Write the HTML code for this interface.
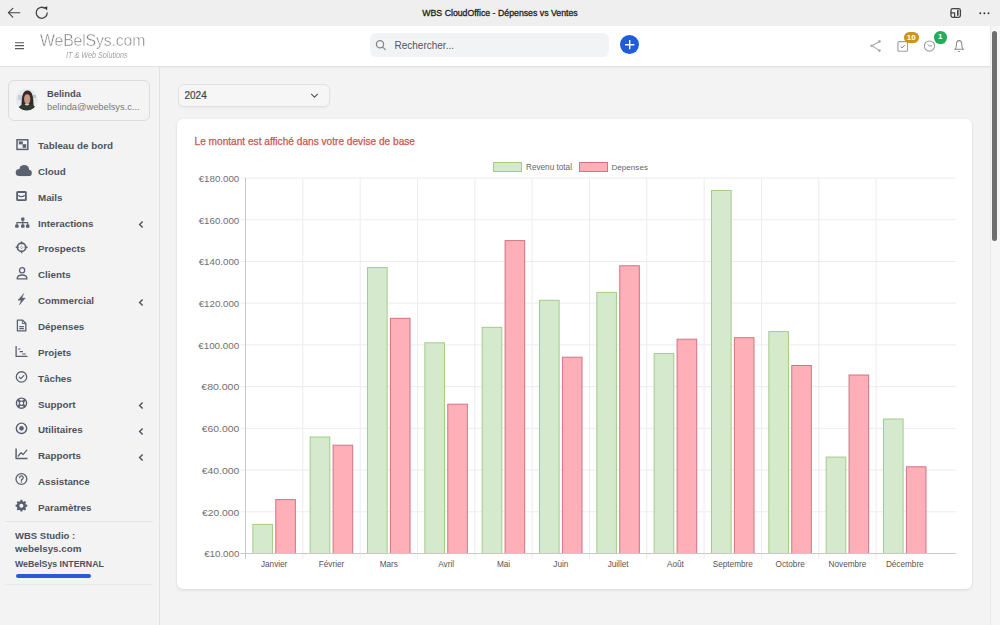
<!DOCTYPE html>
<html><head><meta charset="utf-8">
<style>
*{margin:0;padding:0;box-sizing:border-box}
html,body{width:1000px;height:625px;overflow:hidden;background:#f3f3f3;font-family:"Liberation Sans",sans-serif;position:relative}
.abs{position:absolute}
#chrome{left:0;top:0;width:1000px;height:26px;background:#efefef}
#title{left:0;top:7.8px;width:1000px;text-align:center;font-size:8.75px;color:#222;-webkit-text-stroke:0.3px #222}
#header{left:0;top:26px;width:990px;height:41px;background:#fff;border-bottom:1px solid #e0e0e0;box-shadow:0 1px 1px rgba(0,0,0,0.03)}
#logo{left:40px;top:31px;font-size:17px;color:#7a7a7a;letter-spacing:-0.15px;-webkit-text-stroke:0.5px #fff;transform:scaleX(0.93);transform-origin:left top}
#logo2{left:66px;top:50px;font-size:8.5px;color:#a3a3a3;font-style:italic;transform:scaleX(0.85);transform-origin:left}
#search{left:370px;top:33px;width:239px;height:24px;background:#f2f3f5;border-radius:6px}
#searchtxt{left:394.5px;top:40px;font-size:10px;color:#555}
#plus{left:620px;top:34.6px;width:19.4px;height:19.4px;border-radius:50%;background:#1f5cd8}
#sidebar{left:0;top:67px;width:160px;height:558px;background:#f3f3f3;border-right:1px solid #e1e2e8}
#ucard{left:8px;top:79.5px;width:141.5px;height:41px;border:1px solid #dcdcdc;border-radius:6px;background:#f4f4f4}
.uname{left:47px;top:88.3px;font-size:9.4px;font-weight:bold;color:#4a5060}
.uemail{left:47px;top:101.5px;font-size:9.3px;color:#787878}
.mi{position:absolute;left:38px;font-size:9.8px;font-weight:bold;color:#4d525e;white-space:nowrap}
.chev{position:absolute;left:137px}
.ic{position:absolute;left:14px}
#select{left:177.5px;top:83.5px;width:152px;height:23px;border:1px solid #e2e2e2;border-radius:6px;background:#f6f6f6;box-shadow:0 1px 2px rgba(0,0,0,0.05)}
#seltxt{left:184.5px;top:90px;font-size:10px;color:#444;-webkit-text-stroke:0.2px #444}
#card{left:177px;top:118.5px;width:795px;height:470.5px;background:#fff;border-radius:6px;box-shadow:0 1px 3px rgba(0,0,0,0.12)}
#cardtitle{left:194.5px;top:136.4px;font-size:10.15px;color:#d05353;-webkit-text-stroke:0.25px #d05353}
#scroll{left:990px;top:26px;width:10px;height:599px;background:#f6f6f6;border-left:1px solid #e8e8e8}
#thumb{left:992px;top:30.5px;width:5px;height:210px;border-radius:3px;background:#6e6e6e}
.badge{position:absolute;color:#fff;font-size:8px;font-weight:bold;text-align:center;border-radius:7px}
.side-t{position:absolute;left:15px;font-weight:bold;color:#4b5262;white-space:nowrap}
</style></head><body>
<div id="chrome" class="abs"></div>
<div id="title" class="abs">WBS CloudOffice - Dépenses vs Ventes</div>
<!-- chrome icons -->
<svg class="abs" style="left:0;top:0" width="1000" height="26">
  <path d="M43.6 7.2L47.4 6.5L47.1 10.6Z" fill="#3a3a3a"/>
  <g stroke="#444" stroke-width="1.3" fill="none" stroke-linecap="round" stroke-linejoin="round">
    <path d="M19.8 12.7H8.6M12.8 8.3L8.4 12.7L12.8 17.1" stroke-width="1.15"/>
    <path d="M47.2 12.9A5.5 5.5 0 1 1 44.6 8.1" stroke-width="1.25"/>
    <rect x="951" y="8.6" width="9.4" height="8.8" rx="1.8"/>
    <path d="M957.8 10.3V15.2" stroke-width="1.6"/>
    <path d="M951 12.8H954.6V17.4" stroke-width="1.2"/>
  </g>
  <g fill="#333"><circle cx="980.3" cy="13.2" r="0.95"/><circle cx="984.4" cy="13.2" r="0.95"/><circle cx="988.5" cy="13.2" r="0.95"/></g>
</svg>
<div id="header" class="abs"></div>
<svg class="abs" style="left:0;top:26px" width="990" height="40">
  <g stroke="#5a5a5a" stroke-width="1.1"><path d="M15 16.7H24M15 19.6H24M15 22.6H24"/></g>
</svg>
<div id="logo" class="abs">WeBelSys.com</div>
<div id="logo2" class="abs">IT &amp; Web Solutions</div>
<div id="search" class="abs"></div>
<svg class="abs" style="left:370px;top:33px" width="30" height="24">
  <g stroke="#858585" stroke-width="1.25" fill="none"><circle cx="10" cy="11.3" r="3.6"/><path d="M12.8 14.1L15.3 16.6" stroke-linecap="round"/></g>
</svg>
<div id="searchtxt" class="abs">Rechercher...</div>
<div id="plus" class="abs"></div>
<svg class="abs" style="left:620px;top:34.6px" width="20" height="20">
  <path d="M9.7 5.1V14.3M5.1 9.7H14.3" stroke="#fff" stroke-width="1.4"/>
</svg>
<!-- header right icons -->
<svg class="abs" style="left:860px;top:26px" width="130" height="40">
  <g stroke="#ababab" stroke-width="1.1" fill="none" stroke-linejoin="round">
    <path d="M19.6 15.4L12 19.8L19.6 24.6"/>
  </g>
  <g fill="#b0b0b0"><circle cx="19.4" cy="15.5" r="1.4"/><circle cx="11.6" cy="19.8" r="1.4"/><circle cx="19.4" cy="24.6" r="1.4"/></g>
  <g stroke="#a0a0a6" stroke-width="1.15" fill="none">
    <rect x="37.9" y="15.6" width="9.6" height="9.6" rx="1"/>
    <path d="M40.7 20.6L42 21.9L44.8 19.2" stroke="#80838f" stroke-width="1"/>
  </g>
  <g stroke="#999" stroke-width="1.05" fill="none">
    <circle cx="69.5" cy="20.1" r="5.1"/>
    <path d="M67.6 18.4L69.5 20.1L72.2 19.6" stroke="#888" stroke-width="0.9"/>
    <path d="M94.2 23.3H104M95.3 23.3C96.3 22 96.4 20.6 96.4 18.6C96.4 16 97.5 14.6 99.1 14.6C100.7 14.6 101.8 16 101.8 18.6C101.8 20.6 101.9 22 102.9 23.3M98.3 25.4H99.9" stroke="#8a8a8a"/>
  </g>
</svg>
<div class="badge" style="left:904px;top:31.5px;width:14.5px;height:11.5px;background:#cd9416;line-height:11.5px">10</div>
<div class="badge" style="left:934px;top:31px;width:12.6px;height:12.6px;background:#23ad5a;line-height:12.6px;border-radius:50%">1</div>
<div id="scroll" class="abs"></div>
<div id="thumb" class="abs"></div>
<!-- sidebar -->
<div id="sidebar" class="abs"></div>
<div id="ucard" class="abs"></div>
<svg class="abs" style="left:16px;top:89px" width="22" height="22">
  <defs><clipPath id="av"><circle cx="10.7" cy="10.5" r="11"/></clipPath><filter id="bl"><feGaussianBlur stdDeviation="0.6"/></filter></defs>
  <g clip-path="url(#av)"><g filter="url(#bl)">
    <rect x="-2" y="-2" width="26" height="26" fill="#e4eaee"/>
    <rect x="2" y="6" width="4" height="5" fill="#c5d0dc"/>
    <rect x="17" y="6" width="3" height="3" fill="#b9c4cf"/>
    <path d="M5.5 17C5.5 8 6.5 1.5 11.5 1.5C16.5 1.5 17.5 8 17.5 17Z" fill="#3b2722"/>
    <ellipse cx="11.2" cy="10" rx="3.1" ry="4.8" fill="#c49a86"/>
    <path d="M1 23C2 16.5 6 15 11 15C16 15 20 16.5 21 23Z" fill="#2f3a33"/>
    <path d="M8.8 15.5Q11 17.5 13.2 15.5L12.8 14.5H9.2Z" fill="#d8d2c8"/>
  </g></g>
</svg>
<div class="uname abs">Belinda</div>
<div class="uemail abs">belinda@webelsys.c...</div>
<div class="mi" style="top:140.00px">Tableau de bord</div>
<svg class="ic" style="top:137.00px" width="20" height="16" overflow="visible"><g fill="none" stroke="#5a6070" stroke-width="1.5"><rect x="3" y="2.8" width="10.8" height="9.6"/></g><g fill="#5a6070"><rect x="4.8" y="4.4" width="4" height="3"/><rect x="8.6" y="7.2" width="3.6" height="3.6"/></g></svg>
<div class="mi" style="top:165.85px">Cloud</div>
<svg class="ic" style="top:162.85px" width="20" height="16" overflow="visible"><g fill="#5a6272"><circle cx="5.2" cy="9.6" r="3.5"/><circle cx="10.2" cy="6.8" r="4.9"/><circle cx="14.6" cy="9.9" r="3.2"/><rect x="5.2" y="8" width="9.4" height="5.1"/></g></svg>
<div class="mi" style="top:191.70px">Mails</div>
<svg class="ic" style="top:188.70px" width="20" height="16" overflow="visible"><rect x="3.1" y="3" width="8.8" height="8.2" rx="0.6" fill="#f6f6f8" stroke="#5a6070" stroke-width="1.8"/><path d="M4.3 6.2Q7.5 9.2 10.7 6.2" stroke="#5a6070" stroke-width="1.2" fill="none"/></svg>
<div class="mi" style="top:217.55px">Interactions</div>
<svg class="chev" style="top:218.95px" width="10" height="12"><path d="M5.6 2.5L2.6 5.5L5.6 8.5" stroke="#4a4e58" stroke-width="1.35" fill="none"/></svg>
<svg class="ic" style="top:214.55px" width="20" height="16" overflow="visible"><g fill="#5a6070"><rect x="7.2" y="2.6" width="3.2" height="3.2" rx="0.6"/><rect x="1.2" y="9.6" width="3.4" height="3.2" rx="0.6"/><rect x="7.1" y="9.6" width="3.4" height="3.2" rx="0.6"/><rect x="12" y="9.6" width="3.4" height="3.2" rx="0.6"/></g><path d="M8.8 5.5V10M2.9 10V7.6H13.7V10" stroke="#5a6070" stroke-width="1.1" fill="none"/></svg>
<div class="mi" style="top:243.40px">Prospects</div>
<svg class="ic" style="top:240.40px" width="20" height="16" overflow="visible"><g fill="none" stroke="#5a6070"><circle cx="7.6" cy="7.3" r="4.2" stroke-width="1.7"/><path d="M7.6 1.4V4.2M7.6 10.4V13.2M1.7 7.3H4.5M10.7 7.3H13.5" stroke-width="1.4"/><path d="M7.6 5.6V6.6M7.6 8V9M5.9 7.3H6.9M8.3 7.3H9.3" stroke-width="0.6"/></g></svg>
<div class="mi" style="top:269.25px">Clients</div>
<svg class="ic" style="top:266.25px" width="20" height="16" overflow="visible"><g fill="none" stroke="#5a6070" stroke-width="1.3"><circle cx="8.1" cy="4.2" r="2.6"/><path d="M3.2 12.9C3.2 10.2 5.4 9 8.1 9C10.8 9 13 10.2 13 12.9Z" stroke-linejoin="round"/></g></svg>
<div class="mi" style="top:295.10px">Commercial</div>
<svg class="chev" style="top:296.50px" width="10" height="12"><path d="M5.6 2.5L2.6 5.5L5.6 8.5" stroke="#4a4e58" stroke-width="1.35" fill="none"/></svg>
<svg class="ic" style="top:292.10px" width="20" height="16" overflow="visible"><path d="M9.8 1.4L3.9 8.2H7.2L5.4 12.9L11.3 6H7.9Z" fill="#5a6070" stroke="#5a6070" stroke-width="0.4" stroke-linejoin="round"/></svg>
<div class="mi" style="top:320.95px">Dépenses</div>
<svg class="ic" style="top:317.95px" width="20" height="16" overflow="visible"><g fill="none" stroke="#5a6070" stroke-width="1.3" stroke-linejoin="round"><path d="M3.4 2.1H8.7L11.8 5.2V12.9H3.4Z"/><path d="M8.4 2.3V5.6H11.6" stroke-width="1"/><path d="M5.3 8.6H9.9M5.3 10.6H9.9" stroke-width="1.1"/></g></svg>
<div class="mi" style="top:346.80px">Projets</div>
<svg class="ic" style="top:343.80px" width="20" height="16" overflow="visible"><g fill="none" stroke="#5a6070" stroke-width="1.3"><path d="M2.1 2.1V12.4H13.5"/><path d="M4.1 5H6.2M5.6 7.6H9M8.2 10H11.8" stroke-width="1.2"/></g></svg>
<div class="mi" style="top:372.65px">Tâches</div>
<svg class="ic" style="top:369.65px" width="20" height="16" overflow="visible"><g fill="none" stroke="#5a6070" stroke-width="1.3"><circle cx="7.5" cy="6.95" r="5.2"/><path d="M5.2 7.1L6.8 8.6L9.8 5.6" stroke-linecap="round" stroke-linejoin="round"/></g></svg>
<div class="mi" style="top:398.50px">Support</div>
<svg class="chev" style="top:399.90px" width="10" height="12"><path d="M5.6 2.5L2.6 5.5L5.6 8.5" stroke="#4a4e58" stroke-width="1.35" fill="none"/></svg>
<svg class="ic" style="top:395.50px" width="20" height="16" overflow="visible"><g fill="none" stroke="#5a6070"><circle cx="7.5" cy="7.2" r="5.1" stroke-width="1.4"/><circle cx="7.5" cy="7.2" r="2.2" stroke-width="1.2"/><path d="M3.8 3.5L5.9 5.6M11.2 3.5L9.1 5.6M3.8 10.9L5.9 8.8M11.2 10.9L9.1 8.8" stroke-width="2.2"/></g></svg>
<div class="mi" style="top:424.35px">Utilitaires</div>
<svg class="chev" style="top:425.75px" width="10" height="12"><path d="M5.6 2.5L2.6 5.5L5.6 8.5" stroke="#4a4e58" stroke-width="1.35" fill="none"/></svg>
<svg class="ic" style="top:421.35px" width="20" height="16" overflow="visible"><g fill="none" stroke="#5a6070" stroke-width="1.4"><circle cx="7.5" cy="7.35" r="5.2"/></g><circle cx="7.5" cy="7.35" r="2.3" fill="#5a6070"/></svg>
<div class="mi" style="top:450.20px">Rapports</div>
<svg class="chev" style="top:451.60px" width="10" height="12"><path d="M5.6 2.5L2.6 5.5L5.6 8.5" stroke="#4a4e58" stroke-width="1.35" fill="none"/></svg>
<svg class="ic" style="top:447.20px" width="20" height="16" overflow="visible"><g fill="none" stroke="#5a6070" stroke-width="1.3" stroke-linejoin="round"><path d="M2.1 1.4V11.6H13.5" stroke-width="1.5"/><path d="M4.3 9L7 5.6L9 7.6L12.8 3.2" stroke-linecap="round"/></g></svg>
<div class="mi" style="top:476.05px">Assistance</div>
<svg class="ic" style="top:473.05px" width="20" height="16" overflow="visible"><g fill="none" stroke="#5a6070" stroke-width="1.3"><circle cx="7.4" cy="6.05" r="5.4"/><path d="M5.6 4.7A1.8 1.8 0 1 1 7.9 6.4C7.5 6.6 7.4 6.9 7.4 7.4" stroke-linecap="round"/></g><circle cx="7.4" cy="8.9" r="0.75" fill="#5a6070"/></svg>
<div class="mi" style="top:501.90px">Paramètres</div>
<svg class="ic" style="top:498.90px" width="20" height="16" overflow="visible"><g fill="#5a6070"><path d="M6.3 0.6H8.5L8.9 2.3L10.3 2.9L11.8 2L13.3 3.5L12.4 5L13 6.4L14.7 6.8V9L13 9.4L12.4 10.8L13.3 12.3L11.8 13.8L10.3 12.9L8.9 13.5L8.5 15.2H6.3L5.9 13.5L4.5 12.9L3 13.8L1.5 12.3L2.4 10.8L1.8 9.4L0.1 9V6.8L1.8 6.4L2.4 5L1.5 3.5L3 2L4.5 2.9L5.9 2.3Z" transform="translate(7.4 6.7) scale(0.8) translate(-7.4 -7.9)"/></g><circle cx="7.4" cy="6.7" r="2" fill="#f3f3f3"/>
</svg>
<div class="abs" style="left:5px;top:521px;width:148px;height:1px;background:#e4e4e4"></div>
<div class="side-t" style="top:529.5px;font-size:9.5px">WBS Studio :</div>
<div class="side-t" style="top:543.3px;font-size:9.8px">webelsys.com</div>
<div class="side-t" style="top:559px;font-size:8.75px">WeBelSys INTERNAL</div>
<div class="abs" style="left:15.5px;top:574px;width:75px;height:4px;border-radius:2px;background:#2a5bd7"></div>
<div class="abs" style="left:5px;top:584px;width:148px;height:1px;background:#e9e9e9"></div>
<!-- main -->
<div id="select" class="abs"></div>
<div id="seltxt" class="abs">2024</div>
<svg class="abs" style="left:304px;top:88px" width="20" height="14"><path d="M7.2 5.8L10.5 9.1L13.8 5.8" stroke="#555" stroke-width="1.1" fill="none"/></svg>
<div id="card" class="abs"></div>
<div id="cardtitle" class="abs">Le montant est affiché dans votre devise de base</div>
<svg width="1000" height="625" style="position:absolute;left:0;top:0">
<line x1="240.5" y1="178.00" x2="956" y2="178.00" stroke="#ececec" stroke-width="1"/>
<line x1="240.5" y1="219.72" x2="956" y2="219.72" stroke="#ececec" stroke-width="1"/>
<line x1="240.5" y1="261.44" x2="956" y2="261.44" stroke="#ececec" stroke-width="1"/>
<line x1="240.5" y1="303.17" x2="956" y2="303.17" stroke="#ececec" stroke-width="1"/>
<line x1="240.5" y1="344.89" x2="956" y2="344.89" stroke="#ececec" stroke-width="1"/>
<line x1="240.5" y1="386.61" x2="956" y2="386.61" stroke="#ececec" stroke-width="1"/>
<line x1="240.5" y1="428.33" x2="956" y2="428.33" stroke="#ececec" stroke-width="1"/>
<line x1="240.5" y1="470.06" x2="956" y2="470.06" stroke="#ececec" stroke-width="1"/>
<line x1="240.5" y1="511.78" x2="956" y2="511.78" stroke="#ececec" stroke-width="1"/>
<line x1="302.83" y1="178" x2="302.83" y2="559" stroke="#ececec" stroke-width="1"/>
<line x1="360.16" y1="178" x2="360.16" y2="559" stroke="#ececec" stroke-width="1"/>
<line x1="417.49" y1="178" x2="417.49" y2="559" stroke="#ececec" stroke-width="1"/>
<line x1="474.82" y1="178" x2="474.82" y2="559" stroke="#ececec" stroke-width="1"/>
<line x1="532.15" y1="178" x2="532.15" y2="559" stroke="#ececec" stroke-width="1"/>
<line x1="589.48" y1="178" x2="589.48" y2="559" stroke="#ececec" stroke-width="1"/>
<line x1="646.81" y1="178" x2="646.81" y2="559" stroke="#ececec" stroke-width="1"/>
<line x1="704.14" y1="178" x2="704.14" y2="559" stroke="#ececec" stroke-width="1"/>
<line x1="761.47" y1="178" x2="761.47" y2="559" stroke="#ececec" stroke-width="1"/>
<line x1="818.80" y1="178" x2="818.80" y2="559" stroke="#ececec" stroke-width="1"/>
<line x1="876.13" y1="178" x2="876.13" y2="559" stroke="#ececec" stroke-width="1"/>
<rect x="252.87" y="524.40" width="19.60" height="29.10" fill="#d5e9cd" stroke="#a3cc86" stroke-width="1"/>
<rect x="275.77" y="499.60" width="19.60" height="53.90" fill="#ffafb7" stroke="#d27483" stroke-width="1"/>
<rect x="310.20" y="437.00" width="19.60" height="116.50" fill="#d5e9cd" stroke="#a3cc86" stroke-width="1"/>
<rect x="333.10" y="445.20" width="19.60" height="108.30" fill="#ffafb7" stroke="#d27483" stroke-width="1"/>
<rect x="367.53" y="267.60" width="19.60" height="285.90" fill="#d5e9cd" stroke="#a3cc86" stroke-width="1"/>
<rect x="390.43" y="318.30" width="19.60" height="235.20" fill="#ffafb7" stroke="#d27483" stroke-width="1"/>
<rect x="424.86" y="342.80" width="19.60" height="210.70" fill="#d5e9cd" stroke="#a3cc86" stroke-width="1"/>
<rect x="447.76" y="404.20" width="19.60" height="149.30" fill="#ffafb7" stroke="#d27483" stroke-width="1"/>
<rect x="482.19" y="327.30" width="19.60" height="226.20" fill="#d5e9cd" stroke="#a3cc86" stroke-width="1"/>
<rect x="505.09" y="240.60" width="19.60" height="312.90" fill="#ffafb7" stroke="#d27483" stroke-width="1"/>
<rect x="539.52" y="300.30" width="19.60" height="253.20" fill="#d5e9cd" stroke="#a3cc86" stroke-width="1"/>
<rect x="562.42" y="357.20" width="19.60" height="196.30" fill="#ffafb7" stroke="#d27483" stroke-width="1"/>
<rect x="596.85" y="292.40" width="19.60" height="261.10" fill="#d5e9cd" stroke="#a3cc86" stroke-width="1"/>
<rect x="619.75" y="265.75" width="19.60" height="287.75" fill="#ffafb7" stroke="#d27483" stroke-width="1"/>
<rect x="654.18" y="353.60" width="19.60" height="199.90" fill="#d5e9cd" stroke="#a3cc86" stroke-width="1"/>
<rect x="677.08" y="339.20" width="19.60" height="214.30" fill="#ffafb7" stroke="#d27483" stroke-width="1"/>
<rect x="711.51" y="190.50" width="19.60" height="363.00" fill="#d5e9cd" stroke="#a3cc86" stroke-width="1"/>
<rect x="734.41" y="337.70" width="19.60" height="215.80" fill="#ffafb7" stroke="#d27483" stroke-width="1"/>
<rect x="768.84" y="331.60" width="19.60" height="221.90" fill="#d5e9cd" stroke="#a3cc86" stroke-width="1"/>
<rect x="791.74" y="365.50" width="19.60" height="188.00" fill="#ffafb7" stroke="#d27483" stroke-width="1"/>
<rect x="826.17" y="457.10" width="19.60" height="96.40" fill="#d5e9cd" stroke="#a3cc86" stroke-width="1"/>
<rect x="849.07" y="375.00" width="19.60" height="178.50" fill="#ffafb7" stroke="#d27483" stroke-width="1"/>
<rect x="883.50" y="419.00" width="19.60" height="134.50" fill="#d5e9cd" stroke="#a3cc86" stroke-width="1"/>
<rect x="906.40" y="466.80" width="19.60" height="86.70" fill="#ffafb7" stroke="#d27483" stroke-width="1"/>
<line x1="240.5" y1="553.50" x2="956" y2="553.50" stroke="#c8c8c8" stroke-width="1"/>
<line x1="245.50" y1="178" x2="245.50" y2="559" stroke="#c8c8c8" stroke-width="1"/>
<text x="198.70" y="181.80" textLength="40.60" lengthAdjust="spacingAndGlyphs" font-family="Liberation Sans" font-size="9.4" fill="#707070">€180.000</text>
<text x="198.70" y="223.52" textLength="40.60" lengthAdjust="spacingAndGlyphs" font-family="Liberation Sans" font-size="9.4" fill="#707070">€160.000</text>
<text x="198.70" y="265.24" textLength="40.60" lengthAdjust="spacingAndGlyphs" font-family="Liberation Sans" font-size="9.4" fill="#707070">€140.000</text>
<text x="198.70" y="306.97" textLength="40.60" lengthAdjust="spacingAndGlyphs" font-family="Liberation Sans" font-size="9.4" fill="#707070">€120.000</text>
<text x="198.20" y="348.69" textLength="41.10" lengthAdjust="spacingAndGlyphs" font-family="Liberation Sans" font-size="9.4" fill="#707070">€100.000</text>
<text x="201.30" y="390.41" textLength="38.00" lengthAdjust="spacingAndGlyphs" font-family="Liberation Sans" font-size="9.4" fill="#707070">€80.000</text>
<text x="201.70" y="432.13" textLength="37.60" lengthAdjust="spacingAndGlyphs" font-family="Liberation Sans" font-size="9.4" fill="#707070">€60.000</text>
<text x="201.70" y="473.86" textLength="37.60" lengthAdjust="spacingAndGlyphs" font-family="Liberation Sans" font-size="9.4" fill="#707070">€40.000</text>
<text x="202.00" y="515.58" textLength="37.30" lengthAdjust="spacingAndGlyphs" font-family="Liberation Sans" font-size="9.4" fill="#707070">€20.000</text>
<text x="204.20" y="557.30" textLength="35.10" lengthAdjust="spacingAndGlyphs" font-family="Liberation Sans" font-size="9.4" fill="#707070">€10.000</text>
<text x="274.17" y="567.2" text-anchor="middle" font-family="Liberation Sans" font-size="8.2" fill="#555">Janvier</text>
<text x="331.50" y="567.2" text-anchor="middle" font-family="Liberation Sans" font-size="8.2" fill="#555">Février</text>
<text x="388.82" y="567.2" text-anchor="middle" font-family="Liberation Sans" font-size="8.2" fill="#555">Mars</text>
<text x="446.15" y="567.2" text-anchor="middle" font-family="Liberation Sans" font-size="8.2" fill="#555">Avril</text>
<text x="503.49" y="567.2" text-anchor="middle" font-family="Liberation Sans" font-size="8.2" fill="#555">Mai</text>
<text x="560.82" y="567.2" text-anchor="middle" font-family="Liberation Sans" font-size="8.2" fill="#555">Juin</text>
<text x="618.14" y="567.2" text-anchor="middle" font-family="Liberation Sans" font-size="8.2" fill="#555">Juillet</text>
<text x="675.47" y="567.2" text-anchor="middle" font-family="Liberation Sans" font-size="8.2" fill="#555">Août</text>
<text x="732.81" y="567.2" text-anchor="middle" font-family="Liberation Sans" font-size="8.2" fill="#555">Septembre</text>
<text x="790.13" y="567.2" text-anchor="middle" font-family="Liberation Sans" font-size="8.2" fill="#555">Octobre</text>
<text x="847.47" y="567.2" text-anchor="middle" font-family="Liberation Sans" font-size="8.2" fill="#555">Novembre</text>
<text x="904.79" y="567.2" text-anchor="middle" font-family="Liberation Sans" font-size="8.2" fill="#555">Décembre</text>
<rect x="493.5" y="162.5" width="28" height="9" fill="#d5e9cd" stroke="#a3cc86"/>
<text x="526" y="169.5" font-family="Liberation Sans" font-size="8.2" fill="#666">Revenu total</text>
<rect x="579.5" y="162.5" width="28" height="9" fill="#ffafb7" stroke="#d27483"/>
<text x="611.5" y="169.5" font-family="Liberation Sans" font-size="8.1" fill="#666">Dépenses</text>
</svg>
</body></html>
